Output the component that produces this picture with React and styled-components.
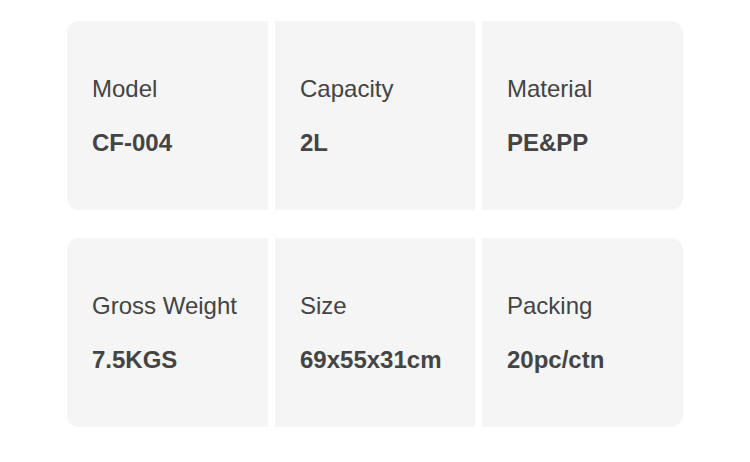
import React from "react";
import styled, { createGlobalStyle } from "styled-components";

const specs = [
  [
    { label: "Model", value: "CF-004" },
    { label: "Capacity", value: "2L" },
    { label: "Material", value: "PE&PP" },
  ],
  [
    { label: "Gross Weight", value: "7.5KGS" },
    { label: "Size", value: "69x55x31cm" },
    { label: "Packing", value: "20pc/ctn" },
  ],
];

function App() {
  return (
    <>
      <GlobalStyle />
      <Page>
        {specs.map((row, i) => (
          <Row key={i}>
            {row.map((item) => (
              <Cell key={item.label}>
                <Label>{item.label}</Label>
                <Value>{item.value}</Value>
              </Cell>
            ))}
          </Row>
        ))}
      </Page>
    </>
  );
}

export default App;

const GlobalStyle = createGlobalStyle`
  body {
    margin: 0;
    background: #ffffff;
    font-family: "Liberation Sans", Arial, sans-serif;
  }
`;

const Page = styled.div`
  width: 750px;
  height: 462px;
  box-sizing: border-box;
  padding: 21px 0 0 67px;
  display: flex;
  flex-direction: column;
  gap: 28px;
`;

const Row = styled.div`
  display: grid;
  grid-template-columns: 201px 200px 201px;
  column-gap: 7px;
  width: 616px;
  height: 189px;
  border-radius: 12px;
  overflow: hidden;
`;

const Cell = styled.div`
  background-color: #f5f5f5;
  box-sizing: border-box;
  padding: 54px 0 0 25px;
  display: flex;
  flex-direction: column;
  gap: 26px;
`;

const Label = styled.span`
  font-size: 24px;
  line-height: 28px;
  color: #444444;
`;

const Value = styled.span`
  font-size: 24px;
  line-height: 28px;
  font-weight: bold;
  color: #444444;
`;
